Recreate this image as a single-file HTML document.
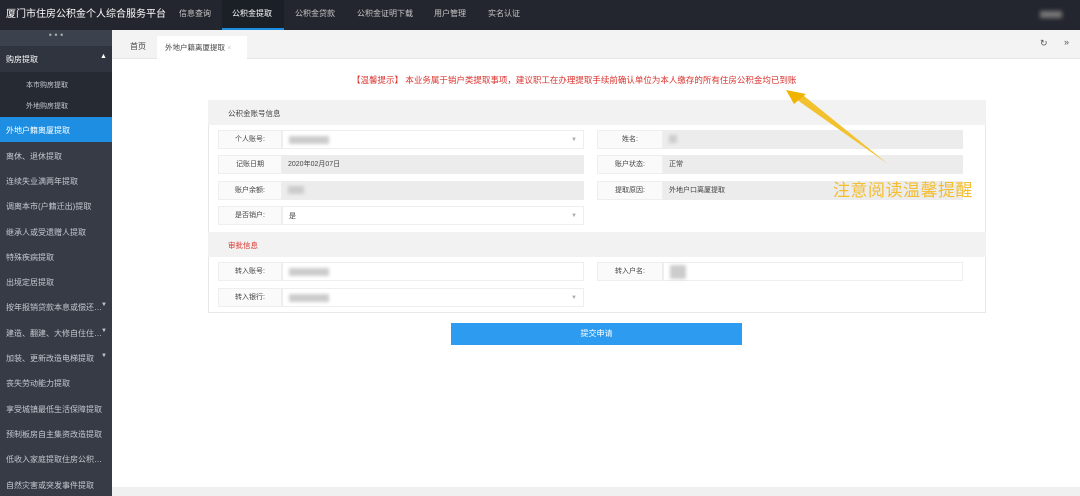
<!DOCTYPE html>
<html><head><meta charset="utf-8"><style>
*{margin:0;padding:0;box-sizing:border-box}
body{width:1080px;height:496px;overflow:hidden;background:#fff;font-family:"Liberation Sans","Noto Sans CJK SC",sans-serif;font-size:8px;color:#333;position:relative}
.a{position:absolute}
.top{left:0;top:0;width:1080px;height:30px;background:#23262e}
.nav{top:0;height:30px;line-height:28px;color:#c8c8c8;font-size:8px}
.side{left:0;top:30px;width:112px;height:466px;background:#363b46}
.si{position:absolute;left:6px;color:#c5c8cf;font-size:8px}
.lbl{border:1px solid #eee;background:#fafafa;text-align:center;line-height:17px;height:19px;font-size:7px;color:#444}
.fld{height:19px;line-height:19px;padding-left:6px;font-size:7px;color:#444}
.g{background:#ececec}
.w{background:#fff;border:1px solid #eee}
.blur{display:inline-block;width:40px;height:8px;background:#ccc;vertical-align:middle;filter:blur(1.5px)}
.dd{position:absolute;right:6px;top:0;color:#aaa;font-size:6px}
</style></head><body>
<div class="a top"></div>
<div class="a" style="left:6px;top:0;line-height:30px;color:#fff;font-size:10px">厦门市住房公积金个人综合服务平台</div>
<div class="a" style="left:222px;top:0;width:62px;height:30px;background:#1b2027;border-bottom:2px solid #1e8de0"></div>
<div class="a nav" style="left:179px">信息查询</div>
<div class="a nav" style="left:232px;color:#fff">公积金提取</div>
<div class="a nav" style="left:295px">公积金贷款</div>
<div class="a nav" style="left:357px">公积金证明下载</div>
<div class="a nav" style="left:434px">用户管理</div>
<div class="a nav" style="left:488px">实名认证</div>
<div class="a" style="left:1040px;top:11px;width:22px;height:7px;background:#777;filter:blur(2px)"></div>

<div class="a side"></div>
<div class="a" style="left:0;top:30px;width:112px;height:16px;background:#3c424d;color:#aaa;text-align:center;font-size:9px;line-height:10px">• • •</div>
<div class="a" style="left:0;top:46px;width:112px;height:26px;background:#2f343e"></div>
<div class="si" style="top:54px;color:#fff">购房提取</div><div class="si" style="left:100px;top:53px;color:#fff;font-size:7px">▲</div>
<div class="a" style="left:0;top:72px;width:112px;height:45px;background:#262a32"></div>
<div class="si" style="left:26px;top:80px;font-size:7px">本市购房提取</div>
<div class="si" style="left:26px;top:101px;font-size:7px">外地购房提取</div>
<div class="a" style="left:0;top:117px;width:112px;height:25px;background:#1e8ee2"></div>
<div class="si" style="top:125px;color:#fff">外地户籍离厦提取</div>
<div class="si" style="top:151px">离休、退休提取</div>
<div class="si" style="top:176px">连续失业满两年提取</div>
<div class="si" style="top:201px">调离本市(户籍迁出)提取</div>
<div class="si" style="top:227px">继承人或受遗赠人提取</div>
<div class="si" style="top:252px">特殊疾病提取</div>
<div class="si" style="top:277px">出境定居提取</div>
<div class="si" style="top:302px">按年报销贷款本息或偿还…</div><div class="si" style="left:101px;top:302px;font-size:6px">▼</div>
<div class="si" style="top:328px">建造、翻建、大修自住住…</div><div class="si" style="left:101px;top:328px;font-size:6px">▼</div>
<div class="si" style="top:353px">加装、更新改造电梯提取</div><div class="si" style="left:101px;top:353px;font-size:6px">▼</div>
<div class="si" style="top:378px">丧失劳动能力提取</div>
<div class="si" style="top:404px">享受城镇最低生活保障提取</div>
<div class="si" style="top:429px">预制板房自主集资改造提取</div>
<div class="si" style="top:454px">低收入家庭提取住房公积…</div>
<div class="si" style="top:480px">自然灾害或突发事件提取</div>

<div class="a" style="left:112px;top:30px;width:968px;height:29px;background:#f3f3f3;border-bottom:1px solid #e6e6e6"></div>
<div class="a" style="left:130px;top:41px;font-size:8px;color:#444">首页</div>
<div class="a" style="left:157px;top:36px;width:90px;height:24px;background:#fff;padding:6px 0 0 8px;font-size:7.5px;color:#444">外地户籍离厦提取 <span style="color:#ccc">×</span></div>
<div class="a" style="left:1040px;top:38px;font-size:9px;color:#555">↻</div>
<div class="a" style="left:1064px;top:37px;font-size:9px;color:#555">»</div>
<div class="a" style="left:112px;top:487px;width:968px;height:9px;background:#f0f0f0"></div>

<div class="a" style="left:352px;top:74px;color:#d9332e;font-size:8.5px">【温馨提示】 本业务属于销户类提取事项，建议职工在办理提取手续前确认单位为本人缴存的所有住房公积金均已到账</div>

<div class="a" style="left:208px;top:100px;width:778px;height:213px;border:1px solid #e8e8e8"></div>
<div class="a" style="left:208px;top:100px;width:778px;height:25px;background:#f2f2f2;padding:8px 0 0 20px;font-size:7.5px;color:#444">公积金账号信息</div>
<div class="a" style="left:208px;top:232px;width:778px;height:25px;background:#f2f2f2;padding:8px 0 0 20px;font-size:7.5px;color:#d9332e">审批信息</div>

<div class="a lbl" style="left:218px;top:130px;width:64px">个人账号:</div>
<div class="a fld w" style="left:282px;top:130px;width:302px"><span class="blur"></span><span class="dd">▼</span></div>
<div class="a lbl" style="left:597px;top:130px;width:66px">姓名:</div>
<div class="a fld g" style="left:663px;top:130px;width:300px"><span class="blur" style="width:8px"></span></div>

<div class="a lbl" style="left:218px;top:155px;width:64px">记账日期</div>
<div class="a fld g" style="left:282px;top:155px;width:302px">2020年02月07日</div>
<div class="a lbl" style="left:597px;top:155px;width:66px">账户状态:</div>
<div class="a fld g" style="left:663px;top:155px;width:300px">正常</div>

<div class="a lbl" style="left:218px;top:181px;width:64px">账户余额:</div>
<div class="a fld g" style="left:282px;top:181px;width:302px"><span class="blur" style="width:16px"></span></div>
<div class="a lbl" style="left:597px;top:181px;width:66px">提取原因:</div>
<div class="a fld g" style="left:663px;top:181px;width:300px">外地户口离厦提取</div>

<div class="a lbl" style="left:218px;top:206px;width:64px">是否销户:</div>
<div class="a fld w" style="left:282px;top:206px;width:302px">是<span class="dd">▼</span></div>

<div class="a lbl" style="left:218px;top:262px;width:64px">转入账号:</div>
<div class="a fld w" style="left:282px;top:262px;width:302px"><span class="blur"></span></div>
<div class="a lbl" style="left:597px;top:262px;width:66px">转入户名:</div>
<div class="a fld w" style="left:663px;top:262px;width:300px"><span class="blur" style="width:16px;height:14px"></span></div>

<div class="a lbl" style="left:218px;top:288px;width:64px">转入银行:</div>
<div class="a fld w" style="left:282px;top:288px;width:302px"><span class="blur"></span><span class="dd">▼</span></div>

<div class="a" style="left:451px;top:323px;width:291px;height:22px;background:#2d9cf0;color:#fff;text-align:center;line-height:22px;font-size:8px">提交申请</div>

<svg class="a" style="left:780px;top:88px" width="120" height="90"><polygon points="10,4 24,8 108,76 20,14" fill="#f2c12e"/><polygon points="6,2 26,6 14,16" fill="#f0b400"/></svg>
<div class="a" style="left:833px;top:176px;color:#f3bd2d;font-size:17px;letter-spacing:0.5px">注意阅读温馨提醒</div>
</body></html>
